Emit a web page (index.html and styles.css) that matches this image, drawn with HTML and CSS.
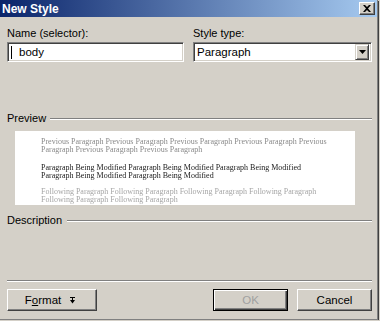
FILE: index.html
```html
<!DOCTYPE html>
<html lang="en">
<head>
    <meta charset="UTF-8">
    <title>New Style</title>
    <link rel="stylesheet" href="styles.css">
</head>
<body>
<div class="window">
    <div class="titlebar">
        <span class="title">New Style</span>
        <span class="close">
            <svg width="8" height="7" viewBox="0 0 8 7"><path d="M0 0h2l2 2 2-2h2L5 3.5 8 7H6L4 5 2 7H0l3-3.5z" fill="#000"/></svg>
        </span>
    </div>
    <div class="content">
        <div class="fields">
            <div class="field">
                <label class="lbl">Name (selector):</label>
                <div class="input"><span class="caret"></span>body</div>
            </div>
            <div class="field">
                <label class="lbl">Style type:</label>
                <div class="input select">
                    <span>Paragraph</span>
                    <span class="drop">
                        <svg width="7" height="4" viewBox="0 0 7 4"><path d="M0 0h7L3.5 4z" fill="#000"/></svg>
                    </span>
                </div>
            </div>
        </div>

        <div class="group preview-head">
            <span class="lbl">Preview</span>
            <span class="rule"></span>
        </div>
        <div class="preview">
            <p class="prev">Previous Paragraph Previous Paragraph Previous Paragraph Previous Paragraph Previous<br>Paragraph Previous Paragraph Previous Paragraph</p>
            <p class="cur">Paragraph Being Modified Paragraph Being Modified Paragraph Being Modified<br>Paragraph Being Modified Paragraph Being Modified</p>
            <p class="next">Following Paragraph Following Paragraph Following Paragraph Following Paragraph<br>Following Paragraph Following Paragraph</p>
        </div>

        <div class="group desc-head">
            <span class="lbl">Description</span>
            <span class="rule"></span>
        </div>

        <div class="sep"></div>

        <div class="buttons">
            <button class="btn format">
                <span>F<u>o</u>rmat</span>
                <svg width="5" height="7" viewBox="0 0 5 7"><path d="M0 0h5v1H0z M2 1h1v3H2z M0 3h5L2.5 6.5z" fill="#000"/></svg>
            </button>
            <span class="spacer"></span>
            <button class="btn ok">OK</button>
            <button class="btn">Cancel</button>
        </div>
    </div>
</div>
</body>
</html>
```

FILE: styles.css
```css
html, body{
    margin: 0;
    padding: 0;
    background: #d4d0c8;
}
.window{
    width: 377px;
    height: 319px;
    background: #d4d0c8;
    border-right: 1px solid #808080;
    border-bottom: 1px solid #808080;
    box-shadow: 1px 1px 0 #404040;
    font-family: "Liberation Sans", Arial, sans-serif;
    font-size: 11px;
    color: #000;
}
.titlebar{
    height: 17px;
    display: flex;
    align-items: center;
    justify-content: space-between;
    padding: 0 2px 0 2px;
    background: linear-gradient(to right, #0a246a, #a6caf0);
}
.title{
    color: #fff;
    font-weight: bold;
    font-size: 12px;
}
.close{
    width: 14px;
    height: 11px;
    display: flex;
    align-items: center;
    justify-content: center;
    background: #d4d0c8;
    border-top: 1px solid #fff;
    border-left: 1px solid #fff;
    border-right: 1px solid #404040;
    border-bottom: 1px solid #404040;
    box-shadow: inset -1px -1px 0 #808080;
}
.content{
    padding: 0 5px 0 7px;
}
.fields{
    display: grid;
    grid-template-columns: 177px 1fr;
    column-gap: 9px;
    padding-top: 10px;
}
.field{
    display: flex;
    flex-direction: column;
}
.lbl{
    line-height: 13px;
    white-space: nowrap;
}
.input{
    margin-top: 2px;
    height: 20px;
    box-sizing: border-box;
    background: #fff;
    border-top: 1px solid #808080;
    border-left: 1px solid #808080;
    border-right: 1px solid #fff;
    border-bottom: 1px solid #fff;
    box-shadow: inset 1px 1px 0 #404040, inset -1px -1px 0 #d4d0c8;
    display: flex;
    align-items: center;
    padding-left: 3px;
    font-size: 11.5px;
}
.caret{
    display: inline-block;
    width: 1px;
    height: 13px;
    background: #000;
    margin-right: 7px;
}
.select{
    justify-content: space-between;
    padding: 2px;
    padding-left: 3px;
}
.drop{
    width: 14px;
    height: 16px;
    box-sizing: border-box;
    display: flex;
    align-items: center;
    justify-content: center;
    background: #d4d0c8;
    border-top: 1px solid #d4d0c8;
    border-left: 1px solid #d4d0c8;
    border-right: 1px solid #404040;
    border-bottom: 1px solid #404040;
    box-shadow: inset 1px 1px 0 #fff, inset -1px -1px 0 #808080;
}
.group{
    display: flex;
    align-items: center;
    gap: 4px;
}
.rule{
    flex: 1;
    height: 0;
    border-top: 1px solid #808080;
    border-bottom: 1px solid #fff;
}
.preview-head{
    margin-top: 50px;
}
.preview{
    margin: 6px 0 0 8px;
    width: 340px;
    height: 74px;
    box-sizing: border-box;
    background: #fff;
    padding: 7px 0 0 26px;
    font-family: "Liberation Serif", "Times New Roman", serif;
    font-size: 8px;
    line-height: 8px;
    white-space: nowrap;
    filter: grayscale(1);
}
.preview p{
    margin: 0;
}
.prev{
    color: #8a8a8a;
}
.cur{
    color: #1a1a1a;
    margin-top: 10px !important;
}
.next{
    color: #a6a6a6;
    margin-top: 8px !important;
}
.desc-head{
    margin-top: 9px;
}
.desc-head .rule{
    margin-left: 1px;
}
.sep{
    margin-top: 53px;
    border-top: 1px solid #808080;
    border-bottom: 1px solid #fff;
}
.buttons{
    display: flex;
    margin-top: 7px;
    gap: 9px;
}
.spacer{
    flex: 1;
}
.btn{
    width: 75px;
    height: 22px;
    box-sizing: border-box;
    margin: 0;
    padding: 0;
    background: #d4d0c8;
    font-family: "Liberation Sans", Arial, sans-serif;
    font-size: 11.5px;
    color: #000;
    border-top: 1px solid #fff;
    border-left: 1px solid #fff;
    border-right: 1px solid #404040;
    border-bottom: 1px solid #404040;
    box-shadow: inset -1px -1px 0 #808080;
}
.format{
    width: 90px;
    display: flex;
    align-items: center;
    justify-content: center;
    gap: 9px;
    padding-right: 4px;
}
.format u{
    text-decoration: underline;
}
.ok{
    color: #a0a0a0;
    border: 1px solid #000;
    box-shadow: inset 1px 1px 0 #fff, inset -1px -1px 0 #404040, inset -2px -2px 0 #808080;
}
```
